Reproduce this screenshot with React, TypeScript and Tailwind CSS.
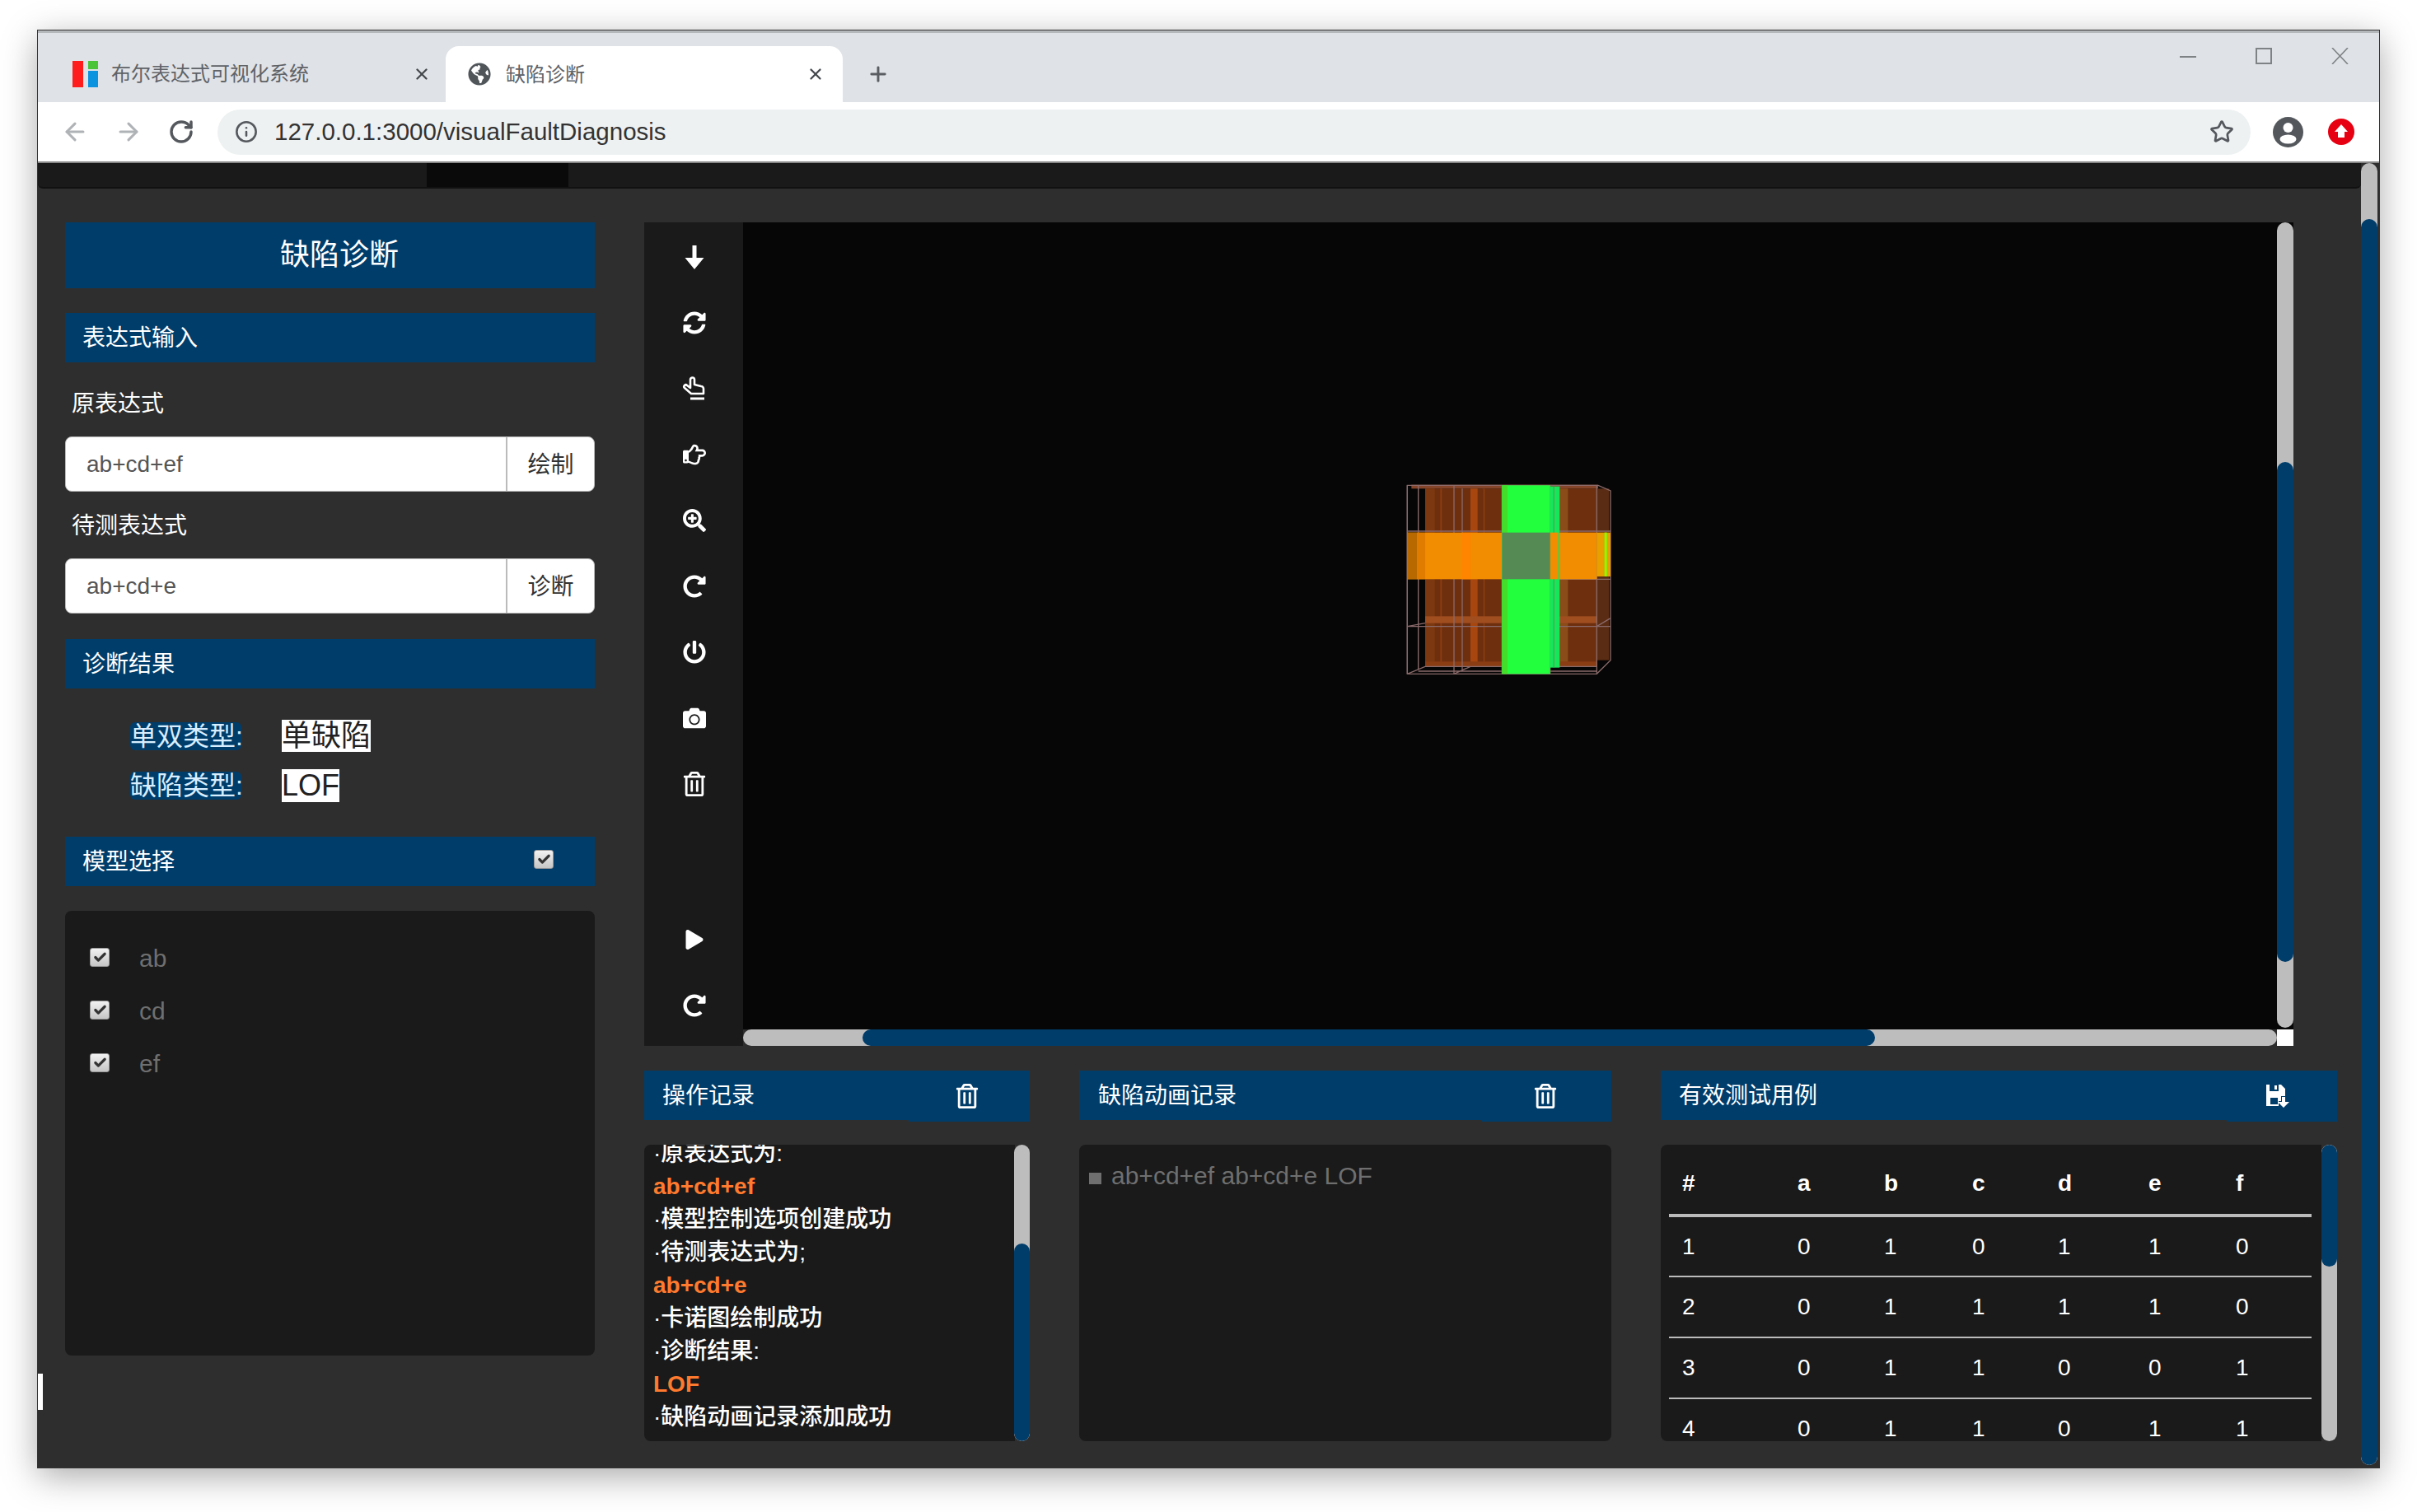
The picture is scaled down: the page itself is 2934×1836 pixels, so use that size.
import React from 'react'
import { ArrowLeft, ArrowRight, Check, Info, Plus, RotateCw, Star, X } from 'lucide-react'
import {
  FaCamera,
  FaGlobeAmericas,
  FaPlay,
  FaPowerOff,
  FaRedoAlt,
  FaRegHandPointRight,
  FaRegTrashAlt,
  FaSearchPlus,
  FaSyncAlt
} from 'react-icons/fa'

const logLines = [
  { text: '·原表达式为:', hot: false },
  { text: 'ab+cd+ef', hot: true },
  { text: '·模型控制选项创建成功', hot: false },
  { text: '·待测表达式为;', hot: false },
  { text: 'ab+cd+e', hot: true },
  { text: '·卡诺图绘制成功', hot: false },
  { text: '·诊断结果:', hot: false },
  { text: 'LOF', hot: true },
  { text: '·缺陷动画记录添加成功', hot: false }
]

const testCases = [
  [1, 0, 1, 0, 1, 1, 0],
  [2, 0, 1, 1, 1, 1, 0],
  [3, 0, 1, 1, 0, 0, 1],
  [4, 0, 1, 1, 0, 1, 1]
]

const colWidths = ['w-[156px]', 'w-[105px]', 'w-[107px]', 'w-[104px]', 'w-[110px]', 'w-[106px]', 'w-[92px]']

function ArrowDownIcon() {
  return (
    <svg width="24" height="29" viewBox="0 0 24 29" fill="white">
      <path d="M9.5 0h5v15h9L12 29 .5 15h9z" />
    </svg>
  )
}

function HandUpIcon() {
  return (
    <svg width="30" height="30" viewBox="0 0 30 30" fill="none" stroke="white">
      <path strokeWidth="2.6" strokeLinejoin="round" d="M11 21 3 14a2 2 0 0 1 3-3l4 3V4a2.5 2.5 0 0 1 5 0v6l8 2a3 3 0 0 1 3 3v6z" />
      <path strokeWidth="3" d="M10 27h17" />
    </svg>
  )
}

function SaveIcon() {
  return (
    <svg width="30" height="30" viewBox="0 0 30 30" fill="white">
      <path
        fillRule="evenodd"
        d="M1 1h4v8h11V1h3l5 5v9h-5v6h-3v6H1zM11 2h3v5h-3zM6 17v8h9v-8z"
      />
      <path d="M20 16h4v6h5l-7 7-7-7h5z" />
    </svg>
  )
}

function ToolButton({ children }: { children: React.ReactNode }) {
  return <div className="flex h-[80px] items-center justify-center pl-[2px] text-[28px] text-white">{children}</div>
}

function CheckMark() {
  return (
    <span className="flex h-[23px] w-[24px] shrink-0 items-center justify-center rounded-[3px] border border-[#999] bg-linear-to-b from-[#f2f2f2] to-[#c6c6c6] text-[#333]">
      <Check size={17} strokeWidth={4.5} />
    </span>
  )
}

function SectionBar({ title, children }: { title: string; children?: React.ReactNode }) {
  return (
    <div className="flex h-[60px] items-center justify-between bg-[#003d6b] pl-[21px] pr-[50px] text-[28px] text-white">
      <span className="pt-[2px]">{title}</span>
      {children}
    </div>
  )
}

function PanelHeader({
  title,
  tailWidth,
  pad,
  children
}: {
  title: string
  tailWidth: string
  pad: string
  children: React.ReactNode
}) {
  return (
    <div className="flex items-start">
      <div className={`flex h-[60px] flex-1 items-center bg-[#003d6b] pt-[2px] text-[28px] text-white ${pad}`}>{title}</div>
      <div className={`flex h-[62px] items-center justify-center bg-[#003d6b] text-white ${tailWidth}`}>{children}</div>
    </div>
  )
}

function Scrollbar({ thumbTop, thumbHeight, className }: { thumbTop: string; thumbHeight: string; className: string }) {
  return (
    <div className={`relative overflow-hidden rounded-full bg-[#bdbdbd] ${className}`}>
      <div className={`absolute inset-x-0 rounded-full bg-[#003d6b] ${thumbTop} ${thumbHeight}`} />
    </div>
  )
}

function ExpressionInput({ value, action }: { value: string; action: string }) {
  return (
    <div className="flex h-[67px] overflow-hidden rounded-lg border border-[#bbb] bg-white text-[28px]">
      <input readOnly value={value} className="w-[536px] border-r-2 border-[#bbb] pl-[25px] text-[#555] outline-none" />
      <button className="flex-1 pt-[2px] text-[#333]">{action}</button>
    </div>
  )
}

function ModelOption({ label }: { label: string }) {
  return (
    <div className="flex h-[64px] items-center gap-[36px] text-[30px] text-[#6f6f6f]">
      <CheckMark />
      <span className="pt-[2px]">{label}</span>
    </div>
  )
}

function KarnaughCube() {
  return (
    <svg width="300" height="270" viewBox="0 0 900 810">
      <rect x="150" y="70" width="625" height="650" fill="#6e2f0e" />
      <rect x="100" y="56" width="680" height="14" fill="#85452a" />
      <rect x="150" y="70" width="35" height="650" fill="#7c3810" />
      <rect x="205" y="70" width="6" height="650" fill="#8a3d12" />
      <rect x="315" y="70" width="26" height="650" fill="#a8460f" />
      <rect x="362" y="70" width="5" height="650" fill="#8a3d12" />
      <rect x="640" y="70" width="30" height="650" fill="#8a4c18" />
      <rect x="775" y="70" width="45" height="625" fill="#5a2c14" />
      <rect x="150" y="535" width="625" height="25" fill="#a04d20" />
      <rect x="150" y="700" width="625" height="20" fill="#8a3d12" />
      <g fill="none" stroke="#8a6a6a" strokeWidth="4">
        <path d="M85 58H780L825 78V695L775 745H85Z" />
        <path d="M85 58V745M125 58V730M255 58V745M285 70V730M430 58V745M605 58V745M775 58V745" />
        <path d="M85 225H825M605 400H825M85 572H825M85 572L150 560M775 572L825 542" />
        <path d="M85 745L150 718H775M255 745L315 718M125 735H430M605 735H775" />
      </g>
      <rect x="85" y="230" width="345" height="170" fill="#f28c00" />
      <rect x="85" y="230" width="35" height="170" fill="#b86a00" />
      <rect x="120" y="230" width="30" height="170" fill="#e07d00" />
      <rect x="285" y="230" width="30" height="170" fill="#ff8400" />
      <rect x="605" y="230" width="170" height="170" fill="#f28c00" />
      <rect x="775" y="230" width="50" height="160" fill="#e8a000" />
      <rect x="803" y="230" width="9" height="160" fill="#80ff00" />
      <rect x="430" y="58" width="175" height="687" fill="#22ff3c" />
      <rect x="430" y="58" width="20" height="687" fill="#44dd2a" />
      <rect x="605" y="62" width="35" height="660" fill="#14e85a" />
      <rect x="617" y="62" width="3" height="660" fill="#6a8a50" />
      <rect x="605" y="230" width="30" height="170" fill="#f28c00" />
      <rect x="430" y="230" width="175" height="170" fill="#558a55" />
    </svg>
  )
}

export default function App() {
  return (
    <div className="h-[1836px] w-[2934px] overflow-hidden bg-white pt-[37px] font-['Liberation_Sans','Noto_Sans_CJK_SC',sans-serif]">
      <div className="relative ml-[46px] flex h-[1745px] w-[2842px] flex-col overflow-hidden shadow-[0_0_0_1px_#333,0_10px_40px_rgba(0,0,0,0.35)]">
        {/* tab strip */}
        <div className="flex h-[87px] border-t-[3px] border-[#b5b8bb] bg-[#dfe2e6]">
          <div className="flex w-[495px] items-center pl-[42px] pt-[15px] text-[24px] text-[#5f6368]">
            <svg width="31" height="32" viewBox="0 0 31 32" className="shrink-0">
              <rect width="13" height="32" fill="#ff1c1c" />
              <rect x="19" width="12" height="10" fill="#4cc43a" />
              <rect x="19" y="12" width="12" height="20" fill="#0b93e0" />
            </svg>
            <span className="ml-[16px] flex-1">布尔表达式可视化系统</span>
            <X size={22} strokeWidth={2.5} className="mr-[18px] text-[#45484c]" />
          </div>
          <div className="mt-[16px] flex h-[68px] w-[482px] items-center rounded-t-2xl bg-white pl-[27px] text-[24px] text-[#5f6368]">
            <FaGlobeAmericas size={28} className="text-[#50555a]" />
            <span className="ml-[18px] flex-1 pt-[2px]">缺陷诊断</span>
            <X size={22} strokeWidth={2.5} className="mr-[22px] text-[#45484c]" />
          </div>
          <div className="ml-[29px] mt-[16px] flex h-[68px] items-center text-[#5a5e63]">
            <Plus size={28} strokeWidth={2.5} />
          </div>
          <div className="ml-auto mr-[37px] flex gap-[72px] pt-[18px] text-[#7f8285]">
            <svg width="20" height="20" viewBox="0 0 20 20" stroke="currentColor" strokeWidth="2">
              <path d="M0 11h20" />
            </svg>
            <svg width="20" height="20" viewBox="0 0 20 20" fill="none" stroke="currentColor" strokeWidth="2">
              <rect x="1" y="1" width="18" height="18" />
            </svg>
            <svg width="21" height="20" viewBox="0 0 21 20" stroke="currentColor" strokeWidth="1.6">
              <path d="M1 0l19 20M20 0L1 20" />
            </svg>
          </div>
        </div>

        {/* toolbar */}
        <div className="flex h-[74px] items-center border-b-2 border-[#888] bg-white">
          <ArrowLeft size={34} strokeWidth={2.2} className="ml-[28px] text-[#b0b3b6]" />
          <ArrowRight size={34} strokeWidth={2.2} className="ml-[31px] text-[#b0b3b6]" />
          <RotateCw size={32} strokeWidth={2.6} className="ml-[31px] text-[#55595e]" />
          <div className="ml-[28px] flex h-[55px] w-[2468px] items-center rounded-full bg-[#eef1f2] pl-[21px] pr-[20px] text-[#55595e]">
            <Info size={28} strokeWidth={2.2} />
            <span className="ml-[20px] flex-1 text-[29.5px] text-[#333]">127.0.0.1:3000/visualFaultDiagnosis</span>
            <Star size={30} strokeWidth={2.2} />
          </div>
          <svg width="37" height="37" viewBox="0 0 37 37" className="ml-[27px]">
            <circle cx="18.5" cy="18.5" r="18.5" fill="#54585d" />
            <circle cx="18.5" cy="13" r="6" fill="white" />
            <ellipse cx="18.5" cy="27" rx="10" ry="5.5" fill="white" />
          </svg>
          <svg width="32" height="32" viewBox="0 0 32 32" className="ml-[30px]">
            <circle cx="16" cy="16" r="16" fill="#e60012" />
            <path d="M16 7l8 9h-4v7h-8v-7H8z" fill="white" />
          </svg>
        </div>

        {/* page */}
        <div className="flex flex-1 bg-[#2e2e2e]">
          <div className="w-[2820px]">
            <div className="flex h-[31px] rounded-b-md border-b-2 border-[#111] bg-[#1a1a1a] pl-[472px]">
              <div className="h-full w-[172px] bg-[#0a0a0a]" />
            </div>

            <div className="flex pl-[33px] pt-[41px]">
              {/* left column */}
              <div className="w-[643px]">
                <div className="flex h-[80px] items-center justify-center bg-[#003d6b] pl-[23px] text-[36px] text-white">
                  缺陷诊断
                </div>
                <div className="mt-[30px]">
                  <SectionBar title="表达式输入" />
                </div>
                <div className="mt-[30px] flex h-[40px] items-center pl-[8px] pt-[2px] text-[28px] text-white">原表达式</div>
                <div className="mt-[20px]">
                  <ExpressionInput value="ab+cd+ef" action="绘制" />
                </div>
                <div className="mt-[21px] flex h-[40px] items-center pl-[8px] pt-[2px] text-[28px] text-white">待测表达式</div>
                <div className="mt-[20px]">
                  <ExpressionInput value="ab+cd+e" action="诊断" />
                </div>
                <div className="mt-[31px]">
                  <SectionBar title="诊断结果" />
                </div>
                <div className="mt-[38px] flex items-center gap-[49px] pl-[79px]">
                  <span className="h-[34px] w-[135px] whitespace-nowrap rounded-md bg-[#003d6b] text-[32px] leading-[34px] text-[#d8eeff]">单双类型:</span>
                  <span className="bg-white text-[36px] leading-[39px] text-[#222]">单缺陷</span>
                </div>
                <div className="mt-[21px] flex items-center gap-[49px] pl-[79px]">
                  <span className="h-[34px] w-[135px] whitespace-nowrap rounded-md bg-[#003d6b] text-[32px] leading-[34px] text-[#d8eeff]">缺陷类型:</span>
                  <span className="bg-white text-[36px] leading-[40px] text-[#222]">LOF</span>
                </div>
                <div className="mt-[42px]">
                  <SectionBar title="模型选择">
                    <span className="-mt-[5px]"><CheckMark /></span>
                  </SectionBar>
                </div>
                <div className="mt-[30px] h-[540px] rounded-lg bg-[#1a1a1a] pl-[30px] pt-[24px]">
                  <ModelOption label="ab" />
                  <ModelOption label="cd" />
                  <ModelOption label="ef" />
                </div>
              </div>

              {/* right column */}
              <div className="ml-[60px] w-[2055px]">
                <div className="flex h-[1000px] w-[2002px]">
                  <div className="w-[120px] bg-[#1a1a1a] pt-[2px]">
                    <ToolButton><ArrowDownIcon /></ToolButton>
                    <ToolButton><FaSyncAlt /></ToolButton>
                    <ToolButton><HandUpIcon /></ToolButton>
                    <ToolButton><FaRegHandPointRight /></ToolButton>
                    <ToolButton><FaSearchPlus /></ToolButton>
                    <ToolButton><FaRedoAlt /></ToolButton>
                    <ToolButton><FaPowerOff /></ToolButton>
                    <ToolButton><FaCamera /></ToolButton>
                    <ToolButton><FaRegTrashAlt size={30} /></ToolButton>
                    <div className="h-[109px]" />
                    <ToolButton><FaPlay size={24} /></ToolButton>
                    <ToolButton><FaRedoAlt /></ToolButton>
                  </div>
                  <div className="flex-1">
                    <div className="flex h-[980px] bg-[#060606]">
                      <div className="flex flex-1 justify-center pr-[6px] pt-[300px]">
                        <KarnaughCube />
                      </div>
                      <Scrollbar className="mb-[2px] w-[20px]" thumbTop="top-[291px]" thumbHeight="h-[607px]" />
                    </div>
                    <div className="flex h-[20px]">
                      <div className="relative flex-1 overflow-hidden rounded-full bg-[#bdbdbd]">
                        <div className="absolute inset-y-0 left-[145px] w-[1229px] rounded-full bg-[#003d6b]" />
                      </div>
                      <div className="h-[20px] w-[20px] bg-white" />
                    </div>
                  </div>
                </div>

                <div className="mt-[30px] flex gap-[60px]">
                  <div className="w-[468px]">
                    <PanelHeader title="操作记录" pad="pl-[22px]" tailWidth="w-[147px]">
                      <span className="mr-[6px]"><FaRegTrashAlt size={30} /></span>
                    </PanelHeader>
                    <div className="mt-[28px] flex h-[360px]">
                      <div className="-mr-[1px] flex-1 overflow-hidden rounded-l-lg bg-[#1a1a1a] pl-[11px] text-[28px] font-medium text-white">
                        <div className="-mt-[9px]">
                          {logLines.map((line, i) => (
                            <div key={i} className={line.hot ? 'h-[40px] font-bold leading-[40px] text-[#ff7a2e]' : 'h-[40px] leading-[40px]'}>
                              {line.text}
                            </div>
                          ))}
                        </div>
                      </div>
                      <Scrollbar className="w-[19px]" thumbTop="top-[120px]" thumbHeight="h-[240px]" />
                    </div>
                  </div>

                  <div className="w-[646px]">
                    <PanelHeader title="缺陷动画记录" pad="pl-[23px]" tailWidth="w-[157px]">
                      <span className="mr-[4px]"><FaRegTrashAlt size={30} /></span>
                    </PanelHeader>
                    <div className="mt-[28px] h-[360px] rounded-lg bg-[#1a1a1a] pl-[12px] pt-[18px] text-[30px] leading-[40px] text-[#6f6f6f]">
                      <span className="mr-[12px] inline-block h-[14px] w-[15px] bg-[#6f6f6f]" />
                      ab+cd+ef ab+cd+e LOF
                    </div>
                  </div>

                  <div className="w-[821px]">
                    <PanelHeader title="有效测试用例" pad="pl-[22px]" tailWidth="w-[134px]">
                      <span className="mr-[10px]"><SaveIcon /></span>
                    </PanelHeader>
                    <div className="mt-[28px] flex h-[360px]">
                      <div className="flex-1 overflow-hidden rounded-l-lg bg-[#1a1a1a] pl-[10px] pr-[11px] pt-[12px]">
                        <table className="w-[780px] table-fixed text-left text-[28px] text-white">
                          <thead>
                            <tr className="h-[74px] border-b-4 border-[#bbb]">
                              {['#', 'a', 'b', 'c', 'd', 'e', 'f'].map((h, i) => (
                                <th key={h} className={`${colWidths[i]} ${i === 0 ? 'pl-[16px]' : ''} pb-[3px] font-bold`}>{h}</th>
                              ))}
                            </tr>
                          </thead>
                          <tbody>
                            {testCases.map((row) => (
                              <tr key={row[0]} className="h-[74px] border-b-2 border-[#bbb]">
                                {row.map((v, i) => (
                                  <td key={i} className={i === 0 ? 'pl-[16px]' : ''}>{v}</td>
                                ))}
                              </tr>
                            ))}
                          </tbody>
                        </table>
                      </div>
                      <Scrollbar className="w-[19px]" thumbTop="top-0" thumbHeight="h-[148px]" />
                    </div>
                  </div>
                </div>
              </div>
            </div>
          </div>

          <Scrollbar className="mb-[3px] w-[20px]" thumbTop="top-[68px]" thumbHeight="h-[1513px]" />
        </div>

        {/* stray white sliver on the window edge */}
        <div className="absolute left-0 top-[1631px] h-[44px] w-[6px] bg-white" />
      </div>
    </div>
  )
}
